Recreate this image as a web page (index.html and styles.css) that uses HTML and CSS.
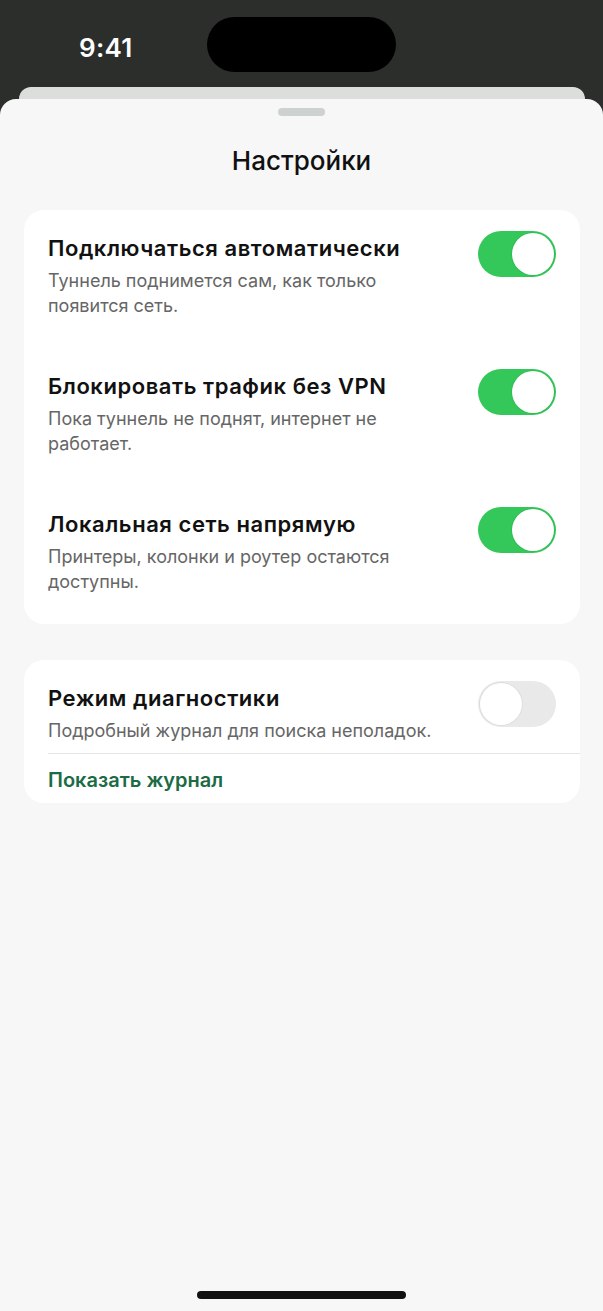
FILE: index.html
```html
<!DOCTYPE html>
<html lang="ru">
<head>
<meta charset="utf-8">
<title>Настройки</title>
<link rel="stylesheet" href="styles.css">
</head>
<body>
<div class="screen">
  <div class="status">
    <span class="time">9:41</span>
    <div class="island"></div>
  </div>
  <div class="back-card"></div>
  <div class="sheet">
    <div class="handle"></div>
    <h1 class="title">Настройки</h1>

    <section class="card">
      <div class="row">
        <div class="text">
          <div class="row-title">Подключаться автоматически</div>
          <div class="row-sub">Туннель поднимется сам, как только появится сеть.</div>
        </div>
        <div class="toggle on"><div class="knob"></div></div>
      </div>
      <div class="row">
        <div class="text">
          <div class="row-title">Блокировать трафик без VPN</div>
          <div class="row-sub">Пока туннель не поднят, интернет не работает.</div>
        </div>
        <div class="toggle on"><div class="knob"></div></div>
      </div>
      <div class="row">
        <div class="text">
          <div class="row-title">Локальная сеть напрямую</div>
          <div class="row-sub">Принтеры, колонки и роутер остаются доступны.</div>
        </div>
        <div class="toggle on"><div class="knob"></div></div>
      </div>
    </section>

    <section class="card card-diag">
      <div class="row row-diag">
        <div class="text">
          <div class="row-title">Режим диагностики</div>
          <div class="row-sub">Подробный журнал для поиска неполадок.</div>
        </div>
        <div class="toggle off"><div class="knob"></div></div>
      </div>
      <div class="divider"></div>
      <div class="link">Показать журнал</div>
    </section>

    <div class="home"></div>
  </div>
</div>
</body>
</html>
```

FILE: styles.css
```css
* { box-sizing: border-box; }
html, body { margin: 0; padding: 0; }
body {
  width: 603px;
  height: 1311px;
  overflow: hidden;
  font-family: Inter, "Noto Sans", "Liberation Sans", sans-serif;
  background: #2b2e2b;
}
.screen {
  display: flex;
  flex-direction: column;
  height: 1311px;
  background: #2b2e2b;
}
.status {
  position: relative;
  height: 87px;
  flex: none;
}
.time {
  position: absolute;
  left: 79px;
  top: 32px;
  color: #ffffff;
  font-size: 26px;
  line-height: 32px;
  font-weight: 600;
  letter-spacing: 0.3px;
}
.island {
  position: absolute;
  left: 207px;
  top: 17px;
  width: 189px;
  height: 55px;
  border-radius: 28px;
  background: #000;
}
.back-card {
  flex: none;
  height: 12px;
  margin: 0 18px 0 19px;
  background: #dcdedc;
  border-radius: 12px 12px 0 0;
}
.sheet {
  flex: 1;
  display: flex;
  flex-direction: column;
  background: #f7f7f7;
  border-radius: 16px 16px 0 0;
}
.handle {
  align-self: center;
  width: 47px;
  height: 8px;
  margin-top: 9px;
  border-radius: 4px;
  background: #cdd2d0;
}
.title {
  margin: 28px 0 32px;
  text-align: center;
  font-size: 26px;
  line-height: 34px;
  font-weight: 500;
  color: #111111;
}
.card {
  margin: 0 23px 0 24px;
  background: #ffffff;
  border-radius: 20px;
}
.row {
  display: flex;
  align-items: flex-start;
  justify-content: space-between;
  padding: 21px 24px 30px;
}
.text {
  width: 392px;
}
.row-title {
  font-size: 22px;
  line-height: 34px;
  font-weight: 600;
  letter-spacing: 0.55px;
  color: #111111;
}
.row-sub {
  margin-top: 3px;
  font-size: 18px;
  line-height: 25px;
  color: #666666;
}
.toggle {
  flex: none;
  width: 78px;
  height: 46px;
  border-radius: 23px;
  padding: 2px;
  display: flex;
}
.toggle.on {
  background: #34c759;
  justify-content: flex-end;
}
.toggle.off {
  background: #e9e9ea;
  justify-content: flex-start;
}
.knob {
  width: 42px;
  height: 42px;
  border-radius: 50%;
  background: #ffffff;
  box-shadow: 0 0 0 1px rgba(0, 0, 0, 0.05);
}
.card-diag {
  margin-top: 36px;
}
.row-diag {
  padding-bottom: 10px;
}
.divider {
  height: 1px;
  margin-left: 24px;
  background: #e4e6e4;
}
.link {
  padding: 13px 24px 0;
  height: 49px;
  font-size: 20px;
  line-height: 26px;
  font-weight: 600;
  color: #1b6b45;
}
.home {
  align-self: center;
  margin-top: auto;
  margin-bottom: 12px;
  width: 209px;
  height: 8px;
  border-radius: 4px;
  background: #111111;
}
```
